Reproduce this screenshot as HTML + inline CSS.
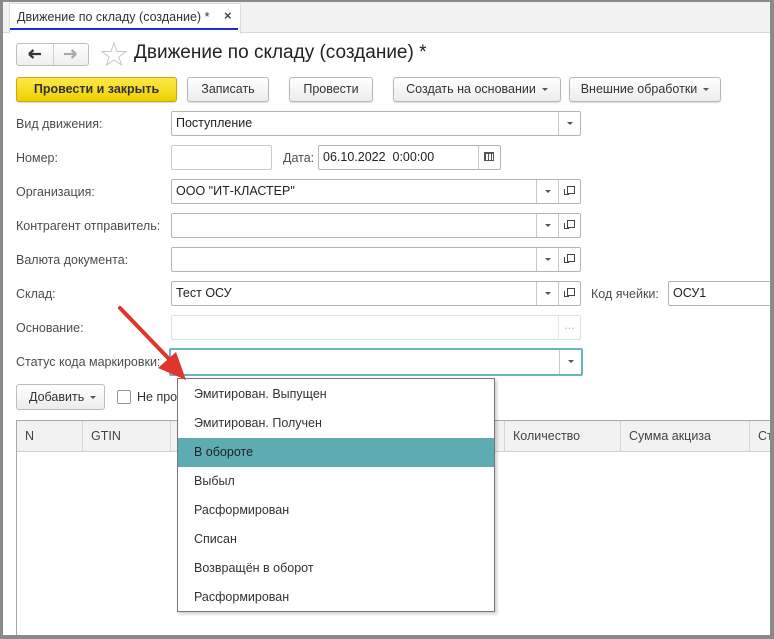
<!DOCTYPE html>
<html><head><meta charset="utf-8"><style>
*{box-sizing:border-box;margin:0;padding:0}
body{width:774px;height:639px;position:relative;overflow:hidden;background:#fff;font-family:"Liberation Sans",Arial,sans-serif;font-size:12.5px;color:#333}
.a{position:absolute}
.lbl{position:absolute;left:16px;color:#4d4d4d;font-size:12.5px}
.fld{position:absolute;border:1px solid #b5b5b5;border-radius:2px;background:#fff;height:25px;padding-left:4px;line-height:23px;color:#222}
.dd{position:absolute;top:0;bottom:0;width:22px;border-left:1px solid #c8c8c8}
.dd:after{content:"";position:absolute;left:8px;top:10px;border:3px solid transparent;border-top:3px solid #555}
.op{position:absolute;top:0;bottom:0;width:22px;border-left:1px solid #c8c8c8}
.op:before{content:"";position:absolute;left:8px;top:6px;width:6px;height:6px;border:1px solid #444;background:#fff}
.op:after{content:"";position:absolute;left:5px;top:9px;width:4px;height:5px;border-left:1px solid #444;border-bottom:1px solid #444}
.btn{position:absolute;top:77px;height:25px;border:1px solid #b9b9b9;border-radius:3px;background:linear-gradient(#fff,#ececec);text-align:center;line-height:23px;color:#333;box-shadow:0 1px 1px rgba(0,0,0,.15)}
.tri{display:inline-block;border:3px solid transparent;border-top:3px solid #555;margin-left:6px;vertical-align:-1px}
.it{position:absolute;left:0;right:0;height:29px;line-height:29px;padding-left:16px;color:#333}
.th{position:absolute;top:0;height:30px;line-height:30px;padding-left:8px;border-right:1px solid #d5d5d5;color:#444}
</style></head><body>
<div class="a" style="left:0;top:0;width:774px;height:33px;background:#f2f2f2;border-bottom:1px solid #d8d8d8"></div>
<div class="a" style="left:9px;top:3px;width:232px;height:31px;background:#fff;border:1px solid #ddd;border-bottom:none"></div>
<div class="a" style="left:17px;top:10px;color:#333;font-size:12.5px">Движение по складу (создание) *</div>
<div class="a" style="left:224px;top:8px;font-size:13px;font-weight:bold;color:#444">×</div>
<div class="a" style="left:10px;top:28px;width:228px;height:2px;background:#1a2fd6"></div>

<!-- nav -->
<div class="a" style="left:16px;top:43px;width:73px;height:23px;border:1px solid #bdbdbd;border-radius:3px;background:linear-gradient(#fff,#efefef)"></div>
<div class="a" style="left:53px;top:44px;width:1px;height:21px;background:#ccc"></div>
<svg class="a" style="left:27px;top:48px" width="16" height="12" viewBox="0 0 16 12"><path d="M2 6H14M2 6L6.5 2M2 6L6.5 10" stroke="#333" stroke-width="2.2" fill="none"/></svg>
<svg class="a" style="left:62px;top:48px" width="16" height="12" viewBox="0 0 16 12"><path d="M2 6H14M14 6L9.5 2M14 6L9.5 10" stroke="#aaa" stroke-width="2.2" fill="none"/></svg>
<svg class="a" style="left:101px;top:42px" width="26" height="24" viewBox="0 0 26 24"><polygon points="13,1 16,9.5 25,9.5 17.8,15 20.5,23 13,18 5.5,23 8.2,15 1,9.5 10,9.5" fill="none" stroke="#c5c5c5" stroke-width="1"/></svg>
<div class="a" style="left:134px;top:42px;font-size:19px;color:#222">Движение по складу (создание) *</div>

<div class="btn" style="left:16px;width:161px;background:linear-gradient(#fbe94a,#f0cf00);border-color:#c9a800;font-weight:bold;color:#333">Провести и закрыть</div>
<div class="btn" style="left:187px;width:82px">Записать</div>
<div class="btn" style="left:289px;width:84px">Провести</div>
<div class="btn" style="left:393px;width:168px">Создать на основании<span class="tri"></span></div>
<div class="btn" style="left:569px;width:152px">Внешние обработки<span class="tri"></span></div>

<div class="lbl" style="top:117px">Вид движения:</div>
<div class="fld" style="left:171px;top:111px;width:410px">Поступление<div class="dd" style="right:0"></div></div>
<div class="lbl" style="top:151px">Номер:</div>
<div class="fld" style="left:171px;top:145px;width:101px;border-color:#ccc"></div>
<div class="a" style="left:283px;top:151px;color:#4d4d4d">Дата:</div>
<div class="fld" style="left:318px;top:145px;width:183px">06.10.2022&nbsp; 0:00:00<div class="a" style="right:0;top:0;bottom:0;width:22px;border-left:1px solid #c8c8c8"></div></div>
<div class="a" style="left:484px;top:152px;width:10px;height:9px;border:1px solid #555;border-top-width:2px;background:repeating-linear-gradient(90deg,#555 0 1px,#fff 1px 3px)"></div>
<div class="lbl" style="top:185px">Организация:</div>
<div class="fld" style="left:171px;top:179px;width:410px">ООО "ИТ-КЛАСТЕР"<div class="dd" style="right:22px"></div><div class="op" style="right:0"></div></div>
<div class="lbl" style="top:219px">Контрагент отправитель:</div>
<div class="fld" style="left:171px;top:213px;width:410px"><div class="dd" style="right:22px"></div><div class="op" style="right:0"></div></div>
<div class="lbl" style="top:253px">Валюта документа:</div>
<div class="fld" style="left:171px;top:247px;width:410px"><div class="dd" style="right:22px"></div><div class="op" style="right:0"></div></div>
<div class="lbl" style="top:287px">Склад:</div>
<div class="fld" style="left:171px;top:281px;width:410px">Тест ОСУ<div class="dd" style="right:22px"></div><div class="op" style="right:0"></div></div>
<div class="a" style="left:591px;top:287px;color:#4d4d4d">Код ячейки:</div>
<div class="fld" style="left:668px;top:281px;width:110px">ОСУ1</div>
<div class="lbl" style="top:321px">Основание:</div>
<div class="fld" style="left:171px;top:315px;width:410px;border-color:#e0e0e0"><div class="a" style="right:0;top:0;bottom:0;width:22px;border-left:1px solid #e5e5e5;color:#bbb;text-align:center;line-height:18px">...</div></div>
<div class="lbl" style="top:355px">Статус кода маркировки:</div>
<div class="fld" style="left:169px;top:348px;width:414px;height:28px;border:2px solid #6ab5b9"><div class="dd" style="right:0;border-left-color:#c8c8c8"></div></div>

<div class="a" style="left:16px;top:384px;width:89px;height:26px;border:1px solid #bdbdbd;border-radius:3px;background:linear-gradient(#fff,#ececec);line-height:24px;padding-left:12px">Добавить<span class="tri"></span></div>
<div class="a" style="left:117px;top:390px;width:14px;height:14px;border:1px solid #999;border-radius:2px;background:#fff"></div>
<div class="a" style="left:137px;top:390px">Не про</div>

<div class="a" style="left:16px;top:420px;width:760px;height:217px;border:1px solid #a8a8a8;border-right:none;border-bottom:none">
 <div class="a" style="left:0;top:0;width:760px;height:31px;background:#f2f2f2;border-bottom:1px solid #d0d0d0">
  <div class="th" style="left:0;width:66px">N</div>
  <div class="th" style="left:66px;width:88px">GTIN</div>
  <div class="th" style="left:487px;width:117px;border-left:1px solid #d5d5d5">Количество</div>
  <div class="th" style="left:604px;width:129px">Сумма акциза</div>
  <div class="th" style="left:733px;width:40px">Ст</div>
 </div>
</div>

<div class="a" style="left:177px;top:378px;width:318px;height:234px;border:1px solid #777;background:#fff;box-shadow:2px 2px 3px rgba(0,0,0,.2)">
 <div class="it" style="top:1px">Эмитирован. Выпущен</div>
 <div class="it" style="top:30px">Эмитирован. Получен</div>
 <div class="it" style="top:59px;background:#5eacb2;color:#222">В обороте</div>
 <div class="it" style="top:88px">Выбыл</div>
 <div class="it" style="top:117px">Расформирован</div>
 <div class="it" style="top:146px">Списан</div>
 <div class="it" style="top:175px">Возвращён в оборот</div>
 <div class="it" style="top:204px">Расформирован</div>
</div>

<svg class="a" style="left:0;top:0" width="774" height="639"><line x1="120" y1="308" x2="170" y2="360" stroke="#e0352b" stroke-width="4" stroke-linecap="round"/><polygon points="186,380 158,368 176,352" fill="#e0352b"/></svg>

<div class="a" style="left:0;top:0;width:774px;height:639px;border:3px solid #8a8a8a;border-top-width:2px;border-right-width:4px;border-bottom-width:4px"></div>
</body></html>
